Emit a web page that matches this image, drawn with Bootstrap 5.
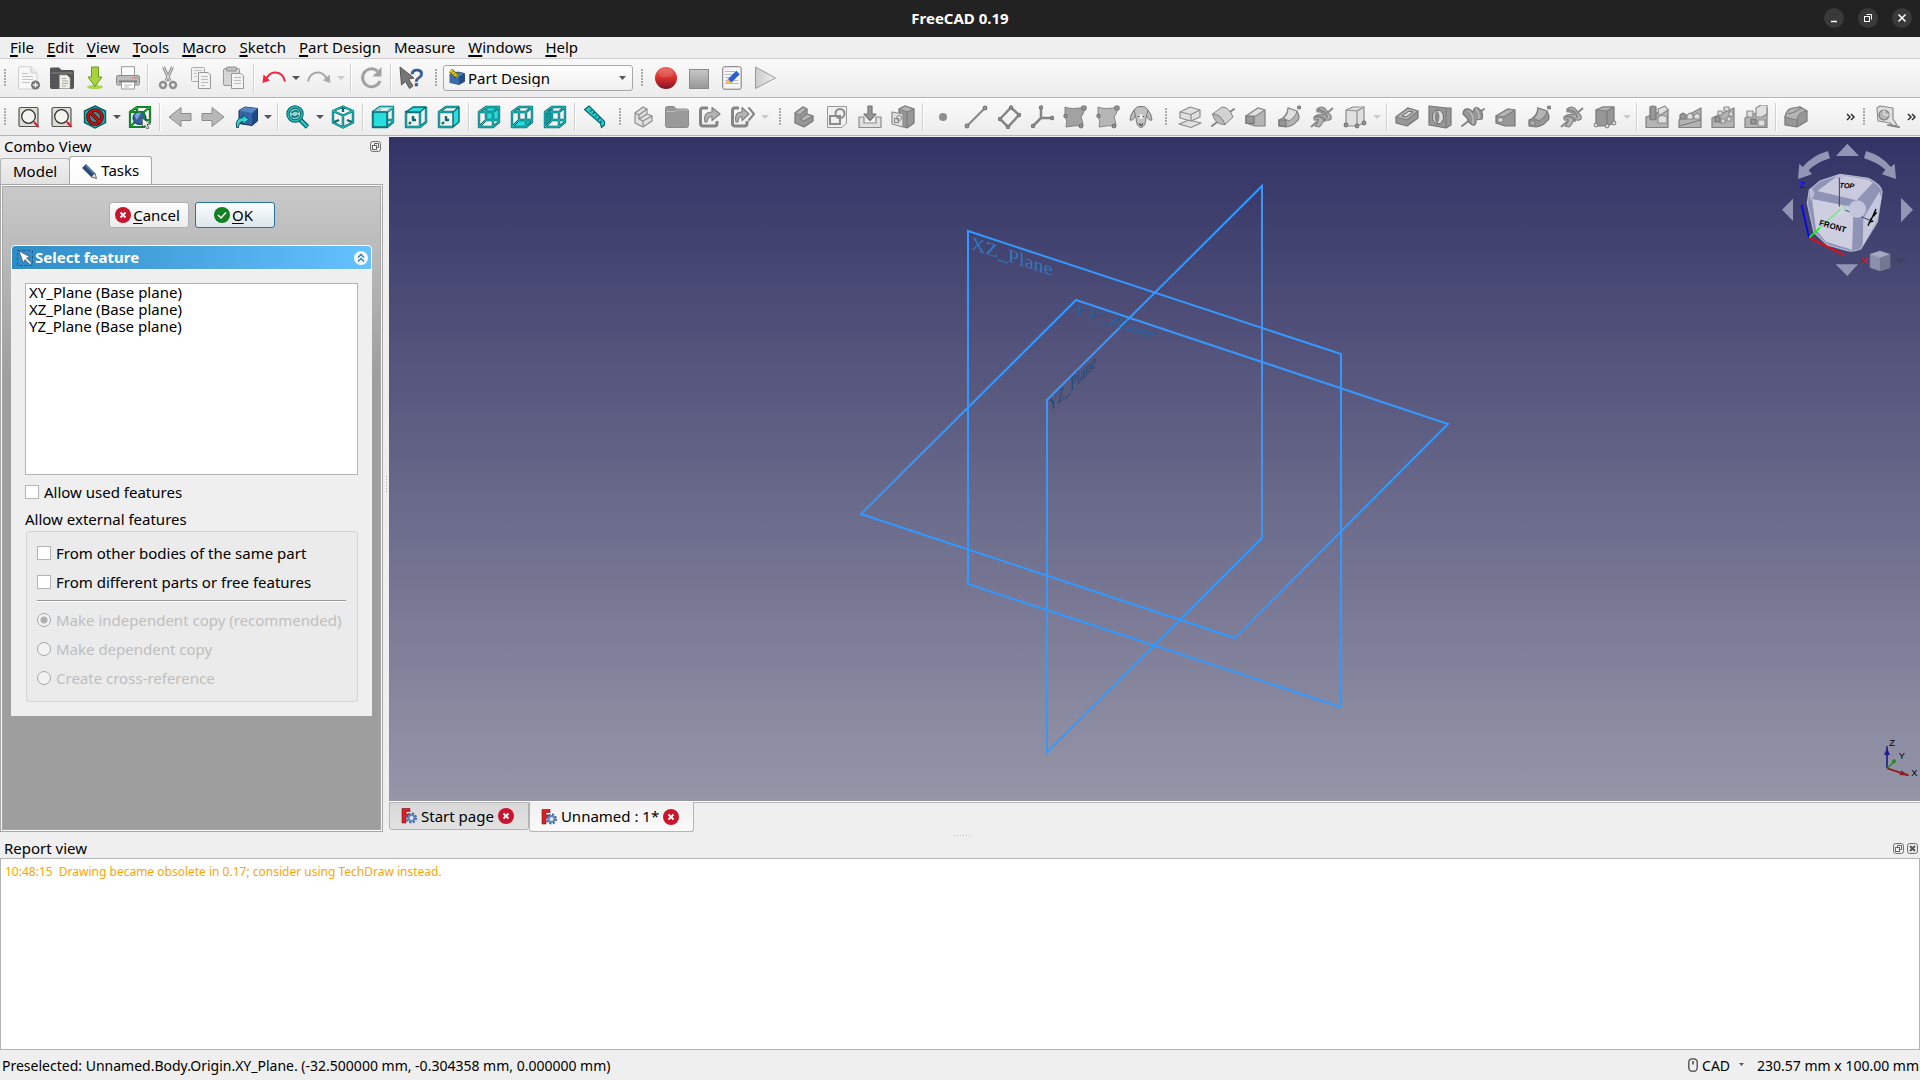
<!DOCTYPE html>
<html lang="en">
<head>
<meta charset="utf-8">
<meta name="viewport" content="width=device-width, initial-scale=1">
<title>FreeCAD 0.19</title>
<link href="https://cdn.jsdelivr.net/npm/bootstrap@5.3.0/dist/css/bootstrap.min.css" rel="stylesheet">
<style>
:root{--line:#b4b4b4;--face:#efefef}
body{font-family:"Noto Sans","Open Sans",sans-serif;font-size:15px;line-height:17px;color:#000;background:var(--face);overflow:hidden}
svg{display:block;flex:none}
.titlebar{background:#222;color:#fff;height:37px}
.winbtns{right:8px;top:8px;gap:14px}
.winbtns button{width:20px;height:20px;border:0;border-radius:50%;background:#393939;padding:0}
.menubar{height:21px;gap:13px;padding-left:10px}
.menubar a{color:#000;text-decoration:none}
.menubar u,.acc{text-decoration:underline;text-underline-offset:2px;text-decoration-thickness:2px}
.acc{text-decoration-thickness:1px}
.tbar{background:linear-gradient(#fafafa,#ececec);border-top:1px solid #d0d0d0;border-bottom:1px solid var(--line)}
.tb-one{height:40px}.tb-two{height:38px;border-top-color:#fff}
.tbtn{width:33px;height:34px;border:0;background:none;padding:0;display:flex;align-items:center;justify-content:center;flex:none}
.tbtn svg{width:24px;height:24px}
.tcar{width:12px;height:34px;border:0;background:none;padding:0;flex:none;display:flex;align-items:center;justify-content:center}
.tcar::after{content:"";border:4px solid transparent;border-top-color:#555;border-bottom:0}
.tcar:disabled::after{border-top-color:#ccc}
.tsep{width:1px;height:28px;background:#d0d0d0;margin:0 3px;flex:none;box-shadow:1px 0 #fff}
.grip{width:4px;height:18px;margin:0 4px 0 8px;flex:none;background-image:radial-gradient(circle at 1px 1px,#aaa 1px,transparent 1px);background-size:4px 3px}
.grip-first{margin:0 4px}
.more{width:16px;border:0;background:none;padding:0;color:#333;flex:none}
.wb{position:relative;width:190px}
.wb svg.ico{position:absolute;left:6px;top:4px}
.wb svg.arr{position:absolute;right:6px;top:10px}
.wb select{height:26px;padding:0 20px 0 24px;font-size:15px;line-height:17px;border:1px solid #a8a8a8;border-radius:3px;background:linear-gradient(#fff,#efefef);color:#000}
.dock{width:384px}
.dock-title{height:20px;padding:1px 3px 0 4px}
.dbtn{width:11px;height:11px;border:0;padding:0;background:none}
.docktabs{height:28px;border:0;padding-left:0;align-items:flex-end;margin-bottom:0}
.docktabs .nav-link{padding:0 12px;border:1px solid var(--line);border-bottom:0;border-radius:3px 3px 0 0;color:#000;height:26px;background:linear-gradient(#f0f0f0,#e2e2e2);font-size:15px;line-height:17px;margin:0}
.docktabs .nav-link.active{height:28px;background:linear-gradient(#fff,#fafafa);color:#000;padding:0 12px 0 11px;margin-left:-1px;border-color:#a8a8a8}
.pane{border:1px solid #a8a8a8;background:#f6f6f6;padding:1px;margin-right:1px}
.paneinner{border:1px solid #a8a8a8;background:linear-gradient(#c9c9c9,#9e9e9e 190px);padding:15px 8px 0}
.qbtns{gap:6px}
.qbtn{height:26px;width:80px;font-size:15px;line-height:17px;padding:0 2px 0 0;border:1px solid #b0b0b0;border-radius:3px;background:linear-gradient(#fdfdfd,#ececec);color:#000;gap:2px}
.qbtn-ok{border-color:#2a72a4;background:linear-gradient(#fbfdfe,#dde6eb)}
.thead{height:25px;border:1px solid #fff;border-radius:4px 4px 0 0;background:linear-gradient(90deg,#308cc6,#66c2ff);color:#fff;font-weight:700;padding:0 3px 0 5px;margin-top:17px;gap:2px}
.tbody{background:var(--face);padding:13px 14px 14px}
.flist{height:192px;background:#fff;border:1px solid var(--line);border-radius:0;padding:0 3px}
.flist li{height:17px}
.tbody .form-check{min-height:0;height:14px;padding:0;margin:0;display:flex;align-items:center}
.tbody .form-check-input{float:none;margin:0 5px 0 0;width:14px;height:14px;border:1px solid #b4b4b4;flex:none;opacity:1}
.tbody .form-check-input[type=checkbox]{border-radius:0}
.tbody .form-check-input[type=radio]{background-color:#f2f2f2;border-color:#a8a8a8}
.tbody .form-check-input[type=radio]:checked{background-image:radial-gradient(circle,#b0b0b0 3px,transparent 4px)}
.tbody .form-check .form-check-label{opacity:1;white-space:nowrap}
.tbody .form-check-input:disabled~.form-check-label{color:#bebebe;opacity:1}
.tbody .used-row{margin-top:10px}
.ext-label{margin-top:12px}
.gbox{border:1px solid #d4d4d4;border-radius:3px;background:#ebebeb;padding:14px 11px 16px 10px;margin:3px 0 0 1px;gap:15px}
.gbox hr{margin:-4px 0 -3px;border-top:1px solid #999;opacity:1;box-shadow:0 1px #fff}
.vsplit{width:5px}
.vsplit::after{content:"";width:1px;height:16px;background:repeating-linear-gradient(#aaa 0 1px,transparent 1px 3px)}
.view3d{background:linear-gradient(#333366,#9696a9);margin-top:1px;min-height:0}
.view3d .scene{width:100%;height:100%}
.navcube{top:0;right:0}
.axes{right:0;bottom:24px}
.doctabs{height:31px;border-top:1px solid #fff;padding:0}
.doctabs .rest{height:1px;background:var(--line)}
.dtab{border:1px solid var(--line);border-radius:0 0 3px 3px;height:28px;background:linear-gradient(#d8d8d8,#e2e2e2);padding:0 14px 0 11px;gap:4px}
.dtab a{color:#000;text-decoration:none}
.dtab.on{height:30px;border-top:0;background:linear-gradient(#f0f0f0,#fafafa)}
.dtab button{border:0;background:none;padding:0}
.reptitle{height:26px;padding:7px 2px 0 4px}
.reptitle::before{content:"";position:absolute;left:50%;top:3px;width:16px;height:1px;margin-left:-6px;background:repeating-linear-gradient(90deg,#bbb 0 1px,transparent 1px 3px)}
.repbtns{gap:3px}
.report{height:192px;border:1px solid var(--line);background:#fff;color:#ffa500;font-size:12px;padding:4px;white-space:pre-wrap}
.status{height:30px;padding:0 1px 0 2px;font-size:14px}
.status button{border:0;background:none;padding:0;color:#000}
.g{fill:#b4b4b4;stroke:#808080;stroke-width:1.2;stroke-linejoin:round}
.gd{fill:#979797;stroke:#767676;stroke-width:1.2;stroke-linejoin:round}
.gl{fill:#e0e0e0;stroke:#8c8c8c;stroke-width:1.2;stroke-linejoin:round}
.gn{fill:none;stroke:#868686;stroke-width:2;stroke-linejoin:round;stroke-linecap:round}
.wd{fill:none;stroke:#0b6a6e;stroke-width:2.4;stroke-linejoin:round}
.wl{fill:none;stroke:#22d3d3;stroke-width:.9}
.wf{fill:#27dddf;stroke:#0b6a6e;stroke-width:1.4;stroke-linejoin:round}
.pl{fill:none;stroke:#3399ff;stroke-width:2}
.plabel{font-family:"Liberation Serif",serif;font-size:19px}
</style>
<script src="https://cdn.jsdelivr.net/npm/bootstrap@5.3.0/dist/js/bootstrap.bundle.min.js"></script>
</head>
<body class="d-flex flex-column vh-100">
<svg width="0" height="0" class="position-absolute" aria-hidden="true">
<defs>
<linearGradient id="lgRed" x1="0" y1="0" x2="0" y2="1"><stop offset="0" stop-color="#ee6258"/><stop offset=".55" stop-color="#d42a2c"/><stop offset="1" stop-color="#7d1426"/></linearGradient>
<linearGradient id="lgGray" x1="0" y1="0" x2="0" y2="1"><stop offset="0" stop-color="#c8c8c8"/><stop offset="1" stop-color="#969696"/></linearGradient>
<linearGradient id="lgPlay" x1="0" y1="0" x2="1" y2="0"><stop offset="0" stop-color="#ccc"/><stop offset="1" stop-color="#eee"/></linearGradient>
<path id="wire" d="M2 7L9 2H22V17L16 22H2Z M2 7H16V22 M16 7L22 2 M9 2V15H22 M9 15L2 22"/>
<symbol id="i-new" viewBox="0 0 24 24"><path d="M3 .7H14L20 7V21.500A1.500 1.500 0 0 1 18.500 23H3A1.500 1.500 0 0 1 1.500 21.500V2A1.500 1.500 0 0 1 3 .7Z" fill="#f8f8f8" stroke="#cfcfcf"/><path d="M14 .7V7H20" fill="#e8e8e8" stroke="#cfcfcf"/><path d="M5 10.500H16M5 13.500H16M5 16.500H13M5 7.500H11" stroke="#c4c4c4"/><circle cx="18.500" cy="19" r="4.500" fill="#777"/><path d="M18.500 16.500V21.500M16 19H21" stroke="#fff" stroke-width="1.300"/></symbol>
<symbol id="i-open" viewBox="0 0 24 24"><path d="M0 3Q0 1.500 1.500 1.500H9L11.500 4H22.500Q24 4 24 5.500V21Q24 23 22 23H2Q0 23 0 21Z" fill="#555"/><path d="M1 7H23" stroke="#888"/><path d="M9.500 9H17L20 12V22.500H9.500Z" fill="#eeeee4" stroke="#aaa" stroke-width=".6"/><path d="M12 12.500H16M12 15H18M12 17.500H18M12 20H16" stroke="#a8a8a0"/></symbol>
<symbol id="i-save" viewBox="0 0 24 24"><ellipse cx="12" cy="21" rx="8" ry="2" fill="#a9d650"/><path d="M8.500 1H15.500V11H19L12 20.500L5 11H8.500Z" fill="#a5d43c" stroke="#6f9a1d" stroke-linejoin="round"/></symbol>
<symbol id="i-print" viewBox="0 0 24 24"><path d="M5.500 .7H18.500V10H5.500Z" fill="#fafafa" stroke="#999"/><rect x=".5" y="9.500" width="23" height="9.500" rx="1.500" fill="#bdbdbd" stroke="#8a8a8a"/><path d="M3 15.500H21" stroke="#777" stroke-width="2"/><path d="M5.500 16H18.500V23H5.500Z" fill="#fff" stroke="#999"/><path d="M8 19H16M8 21H13" stroke="#bbb"/><path d="M16 12H22" stroke="#e55" stroke-dasharray="1.500 .8"/></symbol>
<symbol id="i-cut" viewBox="0 0 24 24"><path d="M7.500 1L14 15M16.500 1L10 15" stroke="#909090" stroke-width="3"/><path d="M7.500 1L14 15M16.500 1L10 15" stroke="#dedede" stroke-width="1"/><circle cx="7" cy="19" r="3" fill="none" stroke="#8e8e8e" stroke-width="2.400"/><circle cx="17" cy="19" r="3" fill="none" stroke="#8e8e8e" stroke-width="2.400"/></symbol>
<symbol id="i-copy" viewBox="0 0 24 24"><rect x="2.500" y="1.500" width="13" height="14" rx="1" fill="#f1f1f1" stroke="#aaa"/><path d="M5 4.500H13M5 7.500H8M5 10.500H8" stroke="#c4c4c4"/><path d="M9.500 6.500H19L21.500 9V22.500H9.500Z" fill="#f3f3f3" stroke="#999"/><path d="M12 10.500H19M12 13.500H19M12 16.500H19M12 19.500H16" stroke="#bcbcbc"/></symbol>
<symbol id="i-paste" viewBox="0 0 24 24"><rect x="1.500" y="2.500" width="16" height="17" rx="1.500" fill="#d6d6d6" stroke="#999"/><rect x="4.500" y="1" width="10" height="4" rx="1" fill="#c0c0c0" stroke="#8e8e8e"/><path d="M9.500 7.500H19L21.500 10V22.500H9.500Z" fill="#f3f3f3" stroke="#999"/><path d="M12 11.500H19M12 14.500H19M12 17.500H19" stroke="#bcbcbc"/></symbol>
<symbol id="i-undo" viewBox="0 0 24 24"><path d="M23 15.500Q21 6 12 6.500Q7.500 7 4 13" fill="none" stroke="#ef2942" stroke-width="2"/><path d="M.5 17L1.500 8.500L8 14.500Z" fill="#ef2942"/></symbol>
<symbol id="i-redo" viewBox="0 0 24 24"><path d="M1 15.500Q3 6 12 6.500Q16.500 7 20 13" fill="none" stroke="#a9a9a9" stroke-width="2"/><path d="M23.500 17L22.500 8.500L16 14.500Z" fill="#a9a9a9"/></symbol>
<symbol id="i-refresh" viewBox="0 0 24 24"><path d="M18.500 5A9 9 0 1 0 21 15" fill="none" stroke="#a2a2a2" stroke-width="3"/><path d="M22.500 1V10.500H13.500Z" fill="#a2a2a2"/></symbol>
<symbol id="i-what" viewBox="0 0 24 24"><text x="11" y="20" font-family="Liberation Sans,sans-serif" font-size="24" fill="#3b669f" stroke="#284a7d" stroke-width=".6">?</text><path d="M1 1L15 12L9.500 13L14 20L10.500 22.500L6.500 15.500L2.500 19Z" fill="#777" stroke="#555"/></symbol>
<symbol id="i-rec" viewBox="0 0 24 24"><circle cx="12" cy="12" r="11" fill="url(#lgRed)"/><ellipse cx="12" cy="7" rx="7.500" ry="4.500" fill="#fff" opacity=".12"/></symbol>
<symbol id="i-stop" viewBox="0 0 24 24"><rect x="2.500" y="3.500" width="19" height="19" fill="url(#lgGray)" stroke="#8a8a8a"/></symbol>
<symbol id="i-macro" viewBox="0 0 24 24"><rect x="2.700" y=".7" width="18.500" height="22.500" rx="2" fill="#f5f5f5" stroke="#777"/><path d="M5 5.500H15M5 8.500H13M5 11.500H11M5 14.500H18M5 17.500H19" stroke="#bbb"/><path d="M18 6.500L9.500 15" stroke="#2a5ed6" stroke-width="5"/><path d="M7.500 12.500L11.500 16.500L5.500 18Z" fill="#f7b56b"/></symbol>
<symbol id="i-play" viewBox="0 0 24 24"><path d="M2.500 1L22.500 12L2.500 22.500Z" fill="url(#lgPlay)" stroke="#9a9a9a"/></symbol>
<symbol id="i-pd" viewBox="0 0 16 16"><path d="M1 5L9 3L15.500 4.500V12.500L10 15.500L1 13.500Z" fill="#4a7fc0" stroke="#173b66" stroke-width=".8"/><path d="M1 6.500L10 8V15.500L1 13.500Z" fill="#3a6cab"/><path d="M10 7.500L15.500 4.500V12.500L10 15.500Z" fill="#234d85"/><path d="M1.500 1.500L8.500 7.500" stroke="#5d5300" stroke-width="4.600"/><path d="M1.500 1.500L8.500 7.500" stroke="#e5cf25" stroke-width="3.200" stroke-dasharray="2.200 .6"/></symbol>
<symbol id="i-fit" viewBox="0 0 24 24"><rect x="2" y="2.500" width="19" height="19" rx="1.500" fill="#deddd6" stroke="#55554f" stroke-width="1.200"/><circle cx="11.500" cy="11.500" r="6.800" fill="#f4f4f0" stroke="#333" stroke-width="1.300"/><path d="M17 17L21.500 22" stroke="#d4213c" stroke-width="2.200"/></symbol>
<symbol id="i-draw" viewBox="0 0 24 24"><path d="M12 1L22.500 6V17.500L12 23L1.500 17.500V6Z" fill="#1ab8bb" stroke="#075e62" stroke-width="1.400"/><circle cx="12" cy="12" r="7" fill="#4f8285" stroke="#200a0a" stroke-width="3.600"/><path d="M7 7L17 17" stroke="#200a0a" stroke-width="3.600"/><circle cx="12" cy="12" r="7" fill="none" stroke="#d60d12" stroke-width="2.200"/><path d="M7 7L17 17" stroke="#d60d12" stroke-width="2.200"/></symbol>
<symbol id="i-bbox" viewBox="0 0 24 24"><use href="#wire" fill="none" stroke="#064d13" stroke-width="2.200"/><use href="#wire" fill="none" stroke="#20b53a" stroke-width="1.100"/><circle cx="11.500" cy="13" r="6.500" fill="#365fa3" stroke="#0c2d5c"/><path d="M6.500 10.500A5.500 5.500 0 0 1 13 7.800L9 15Z" fill="#7ea3d6"/><path d="M2 7H16V22H2Z" fill="none" stroke="#12882a" stroke-width="1.500"/><path d="M14 13L22.500 19L19 19.500L21 23L19 24L17 20.500L14.500 22Z" fill="#eee" stroke="#444" stroke-width=".8"/></symbol>
<symbol id="i-back" viewBox="0 0 24 24"><path d="M1 12L13 2.500V8.500H23V15.500H13V21.500Z" fill="#b8b8b8" stroke="#8b8b8b"/></symbol>
<symbol id="i-fwd" viewBox="0 0 24 24"><path d="M23 12L11 2.500V8.500H1V15.500H11V21.500Z" fill="#b8b8b8" stroke="#8b8b8b"/></symbol>
<symbol id="i-link" viewBox="0 0 24 24"><path d="M5 5.500L11 2L23.500 3.500V16L18 20.500L5 18.500Z" fill="#3465a4" stroke="#142c50"/><path d="M18 8L23.500 3.500V16L18 20.500Z" fill="#204a87"/><path d="M5 5.500L11 2L23.500 3.500L18 8Z" fill="#5585c2"/><path d="M2.500 22.500Q1 13 9 12.500V9.500L14.500 14.500L9 19.500V16.500Q4.500 17 4.500 22.500Z" fill="#32d4d8" stroke="#065056"/></symbol>
<symbol id="i-zoom" viewBox="0 0 24 24"><path d="M13 13.500L21.500 22" stroke="#075e62" stroke-width="4.800"/><path d="M14 14.500L21 21.500" stroke="#27d0d2" stroke-width="2.300"/><circle cx="9" cy="9" r="7" fill="#9fd5d4" stroke="#075e62" stroke-width="3.400"/><circle cx="9" cy="9" r="7" fill="none" stroke="#27bfc2" stroke-width="1.500"/><path d="M5.500 8Q9 4 12.500 7.500M12.500 10Q9 14 5.500 10.500" fill="none" stroke="#0c8085" stroke-width="2"/></symbol>
<symbol id="i-iso" viewBox="0 0 24 24"><path class="wd" d="M12 1.500L22 6V17.500L12 22.500L2 17.500V6ZM2 6L12 10.500L22 6M12 10.500V22.500M12 1.500V7M2 17.500L8 15M22 17.500L16 15"/><path class="wl" d="M12 1.500L22 6V17.500L12 22.500L2 17.500V6ZM2 6L12 10.500L22 6M12 10.500V22.500"/></symbol>
<symbol id="i-front" viewBox="0 0 24 24"><use href="#wire" class="wd"/><use href="#wire" class="wl"/><path d="M9 2H22L16 7H2Z" fill="#f2f2f2" opacity=".6"/><path class="wf" d="M2 7H16V22H2Z"/></symbol>
<symbol id="i-top" viewBox="0 0 24 24"><path class="wd" d="M2 7H16V22H2ZM16 22L22 17V2M9 11V15H12M5 19L7 17"/><path class="wl" d="M2 7H16V22H2ZM16 22L22 17V2"/><path class="wf" d="M2 7L9 2H22L16 7Z"/></symbol>
<symbol id="i-right" viewBox="0 0 24 24"><path class="wd" d="M16 7H2V22H16M2 7L9 2H22M9 11V15H12M5 19L7 17"/><path class="wl" d="M16 7H2V22H16M2 7L9 2H22"/><path class="wf" d="M16 7L22 2V17L16 22Z"/></symbol>
<symbol id="i-rear" viewBox="0 0 24 24"><path class="wf" d="M9 2H22V15H9Z"/><use href="#wire" class="wd"/><use href="#wire" class="wl"/></symbol>
<symbol id="i-bottom" viewBox="0 0 24 24"><path class="wf" d="M2 22L9 15H22L16 22Z"/><use href="#wire" class="wd"/><use href="#wire" class="wl"/></symbol>
<symbol id="i-left" viewBox="0 0 24 24"><path d="M2 7L9 2V15L2 22Z" fill="#12989c"/><use href="#wire" class="wd"/><use href="#wire" class="wl"/></symbol>
<symbol id="i-ruler" viewBox="0 0 24 24"><path d="M1.500 4.500L6 1L21.500 16.500V20L18.500 22.500L17.500 18.500Z" fill="#27cdd0" stroke="#0b6a6e" stroke-width="1.200" stroke-linejoin="round"/><path d="M7 6.500L8.500 5M9.500 9L12 7M12 12L13.500 10.500M14.500 14.500L17 12.500M17 17.500L18.500 16" stroke="#075e62" stroke-width="1.300"/></symbol>
<symbol id="i-part" viewBox="0 0 24 24"><path class="gl" d="M3 8L11 2L15 4V9L20 11V16L11 22L3 18Z"/><path class="gl" d="M3 8L7 10V14L11 16V22M7 10L15 4M11 16L20 11M7 14L15 9"/></symbol>
<symbol id="i-folder" viewBox="0 0 24 24"><path d="M.5 3.500Q.5 1.500 2.500 1.500H9L11 4H21.500Q23.500 4 23.500 6V20.500Q23.500 22.500 21.500 22.500H2.500Q.5 22.500 .5 20.500Z" fill="#999" stroke="#8a8a8a"/><path d="M1 6.500H10L12 5H23" fill="none" stroke="#bbb"/></symbol>
<symbol id="i-share" viewBox="0 0 24 24"><path d="M10 3H5Q2.500 3 2.500 5.500V18.500Q2.500 21 5 21H16.500Q19 21 19 18.500V16" fill="none" stroke="#858585" stroke-width="3"/><path class="g" d="M7 17Q5 7 14 7V2.500L22 9L14 15.500V11.500Q9.500 11.500 9 17Z"/></symbol>
<symbol id="i-share2" viewBox="0 0 24 24"><path d="M8 3H4Q1.500 3 1.500 5.500V18.500Q1.500 21 4 21H13.500Q16 21 16 18.500V16" fill="none" stroke="#858585" stroke-width="3"/><path class="g" d="M5 17Q3 7 11 7V2.500L18 9L11 15.500V11.500Q7 11.500 7 17Z"/><path class="gn" d="M18 3L23 9L18 15"/></symbol>
<symbol id="i-body" viewBox="0 0 24 24"><path class="gd" d="M3 8L11 2L15 4V9L21 11V16L12 22L3 18Z"/><path class="g" d="M3 8L11 2L15 4L8 10ZM8 14L15 9L21 11L12 16Z"/></symbol>
<symbol id="i-sketch" viewBox="0 0 24 24"><path d="M2.500 1.500H21.500V18L17 22.500H2.500Z" fill="#f0f0f0" stroke="#999"/><rect x="5" y="11" width="10" height="8" fill="none" stroke="#8b8b8b" stroke-width="2"/><circle cx="15" cy="8.500" r="4.500" fill="none" stroke="#8b8b8b" stroke-width="2"/></symbol>
<symbol id="i-import" viewBox="0 0 24 24"><path class="gl" d="M1 12H6V18H18V12H23V22.500H1Z"/><path class="gd" d="M10 1H14V9H18L12 15.500L6 9H10Z"/></symbol>
<symbol id="i-binder" viewBox="0 0 24 24"><path class="gd" d="M8 4L14 1L23 4V18L16 23L8 20Z"/><path class="g" d="M8 4L14 1L23 4L16 7Z"/><path d="M16 7V23" stroke="#777"/><path class="gl" d="M1 7L12 9V22L1 19Z"/><circle cx="8" cy="13" r="2.500" fill="none" stroke="#888"/><rect x="3.500" y="13.500" width="4" height="4" fill="none" stroke="#888"/></symbol>
<symbol id="i-point" viewBox="0 0 24 24"><circle cx="12" cy="12" r="4" fill="#8e8e8e"/></symbol>
<symbol id="i-line" viewBox="0 0 24 24"><path class="gn" d="M3 21L21 3"/><g class="gd"><circle cx="3" cy="21" r="1.800"/><circle cx="21" cy="3" r="1.800"/></g></symbol>
<symbol id="i-plane" viewBox="0 0 24 24"><path d="M3 14L14 2.500L22 10L11 22Z" fill="none" stroke="#858585" stroke-width="2.500"/><g class="gd"><circle cx="3" cy="14" r="1.600"/><circle cx="14" cy="2.500" r="1.600"/><circle cx="22" cy="10" r="1.600"/><circle cx="11" cy="22" r="1.600"/></g></symbol>
<symbol id="i-axis" viewBox="0 0 24 24"><path d="M11 2V13H22M11 13L3 21" fill="none" stroke="#858585" stroke-width="2.500"/><g class="gd"><circle cx="11" cy="2.500" r="1.600"/><circle cx="22" cy="13" r="1.600"/><circle cx="3" cy="21" r="1.600"/></g></symbol>
<symbol id="i-surf" viewBox="0 0 24 24"><path fill="#a2a2a2" stroke="#808080" d="M2 2Q9 5 22 2Q21 9 18 12Q20 17 20 21Q13 20 3 22Q5 16 2 11Z"/><g class="gd"><rect x="19" y="1" width="4" height="4" rx="1"/><circle cx="2.500" cy="11" r="1.600"/><circle cx="18" cy="21" r="1.800"/></g></symbol>
<symbol id="i-surf2" viewBox="0 0 24 24"><path fill="#b6b6b6" stroke="#888" d="M2 2Q9 5 22 2Q21 9 18 12Q20 17 20 21Q13 20 3 22Q5 16 2 11Z"/><g class="gd"><rect x="19" y="1" width="4" height="4" rx="1"/><circle cx="2.500" cy="11" r="1.600"/><circle cx="18" cy="21" r="1.800"/></g></symbol>
<symbol id="i-sheep" viewBox="0 0 24 24"><path fill="#bdbdbd" stroke="#777" d="M6 4Q1.500 8 1 15Q4 16.500 7 10ZM18 4Q22.500 8 23 15Q20 16.500 17 10Z"/><path fill="#c2c2c2" stroke="#777" d="M5 5Q8 .5 12 1.500Q16 .5 19 5L17 13Q16.500 22 12 22.500Q7.500 22 7 13Z"/><ellipse cx="12" cy="11.500" rx="4" ry="2" fill="#f4f4f4"/><path d="M8.500 11.500H10.500M13.500 11.500H15.500M10 18.500L12 20.500L14 18.500" stroke="#555" stroke-width="1.300" fill="none"/></symbol>
<symbol id="i-pad" viewBox="0 0 24 24"><path class="gl" d="M1 19L11 15L23 18L13 22.500Z"/><path class="gl" d="M2 7L12 2L22 5V12L13 16L2 13Z"/><path class="gl" d="M2 7L13 9.500L22 5M13 9.500V16"/></symbol>
<symbol id="i-rev" viewBox="0 0 24 24"><path class="gn" d="M1 21L23 4"/><path fill="#d2d2d2" stroke="#858585" stroke-linejoin="round" d="M1.500 9L11 2Q18 2 22 12L14 19.500Q10 9 1.500 9Z"/><path fill="#b8b8b8" stroke="#858585" d="M1.500 9Q10 9 14 19.500Q4 20 1.500 9Z"/></symbol>
<symbol id="i-loft" viewBox="0 0 24 24"><path class="g" d="M2 11L14 3L21 5V21H11L2 18Z"/><path class="gl" d="M2 11L14 3L21 5L10 12Z"/><rect x="2" y="11" width="8" height="7.500" class="gd"/></symbol>
<symbol id="i-pipe" viewBox="0 0 24 24"><path class="g" d="M2 15Q10 12 11 3L20 6Q24 14 20 16Q16 21 9 22L2 21Z"/><path class="gl" d="M6 13Q11 10 11 3L20 6Q19 12 12 16Z"/><rect x="2" y="15" width="7" height="6" class="gd"/><circle cx="22" cy="2.500" r="1.500" class="gd"/></symbol>
<symbol id="i-subpipe" viewBox="0 0 24 24"><path class="gd" d="M2 15Q10 12 11 3L20 6Q24 14 20 16Q16 21 9 22L2 21Z"/><path class="g" d="M6 13Q11 10 11 3L20 6Q19 12 12 16Z"/><rect x="3" y="16" width="5" height="4" class="g"/><circle cx="22" cy="2.500" r="1.500" class="gd"/></symbol>
<symbol id="i-helix" viewBox="0 0 24 24"><path d="M1 22L23 3" stroke="#888" stroke-width="2"/><path class="g" d="M7 4Q14 -1 18 8Q22 10 21 14Q17 17 14 13Q13 19 9 22L5 21Q9 17 8 14Q3 17 4 12Q8 8 14 10Q12 6 7 7Z"/><path class="gn" d="M5 12Q12 10 15 16M8 5Q16 5 17 12"/></symbol>
<symbol id="i-box" viewBox="0 0 24 24"><path class="gl" d="M3 5L10 2H21V18L14 21H3Z"/><path class="gl" d="M3 5L14 6L21 2M14 6V21"/><g class="gd"><circle cx="3" cy="20" r="1.800"/><circle cx="14" cy="21" r="1.800"/><circle cx="21" cy="18" r="1.800"/></g></symbol>
<symbol id="i-pocket" viewBox="0 0 24 24"><path class="gd" d="M1 12L13 3L23 6V13L12 21L1 18Z"/><path class="g" d="M1 12L13 3L23 6L12 15Z"/><path d="M7 11L14 6L18 7L11 12Z" fill="#ddd" stroke="#666"/></symbol>
<symbol id="i-hole" viewBox="0 0 24 24"><path class="gd" d="M1 1L19 3H23V20L18 23L1 20Z"/><path d="M18 3V23" stroke="#777"/><ellipse cx="10" cy="12" rx="5.500" ry="7" fill="#ddd" stroke="#666"/><path d="M9 5Q14 12 9 19Q4 12 9 5Z" fill="#888"/></symbol>
<symbol id="i-groove" viewBox="0 0 24 24"><path class="gn" d="M1 21L23 4"/><path class="gd" d="M2 9Q2 3 8 4L12 7Q13 1 17 3Q23 7 21 14L15 15Q15 21 12 20Q8 19 6 13Z"/><path d="M7 5Q13 9 12 19M15 3Q19 8 18 14" fill="none" stroke="#ccc"/></symbol>
<symbol id="i-subloft" viewBox="0 0 24 24"><path class="gd" d="M2 11L14 4L21 5V21H11L2 18Z"/><path class="g" d="M2 11L14 4L21 5L10 12Z"/><rect x="4" y="13" width="5" height="4" class="gl"/></symbol>
<symbol id="i-subbox" viewBox="0 0 24 24"><path class="gd" d="M3 5L10 2H21V18L14 21H3Z"/><path class="g" d="M3 5L10 2H21L14 6Z"/><path d="M14 6V21" stroke="#767676"/><g class="gl"><circle cx="3" cy="20" r="1.800"/><circle cx="14" cy="21" r="1.800"/><circle cx="21" cy="18" r="1.800"/></g></symbol>
<symbol id="i-mirror" viewBox="0 0 24 24"><path class="g" d="M1 12L12 8L23 4V22.500H1Z"/><path class="gd" d="M5 2Q8 0 11 2V14Q8 16 5 14Z"/><path class="gl" d="M13 4L20 1L23 5L14 11ZM13 12Q17 9 22 12V18H13Z"/></symbol>
<symbol id="i-linpat" viewBox="0 0 24 24"><path class="g" d="M1 15L23 3V22.500H1Z"/><path class="gd" d="M2 10L5 8L8 10V14H2Z"/><path class="gl" d="M9 10L12 8L15 10V14H9ZM16 10L19 8L22 10V14H16Z"/><path d="M1 21L23 15" stroke="#777"/></symbol>
<symbol id="i-polpat" viewBox="0 0 24 24"><path class="g" d="M1 13L23 3V22.500H1Z"/><path class="gd" d="M4 12H9V17H4Z"/><path class="gl" d="M7 6H11V10H7ZM13 2H18V6H13ZM18 7H22V11H18ZM16 12H20V16H16ZM10 14H14V18H10Z"/></symbol>
<symbol id="i-multi" viewBox="0 0 24 24"><path class="g" d="M1 13L23 3V22.500H1Z"/><path class="gl" d="M3 6H9V12H3ZM12 3L17 0H23V9L18 12H12ZM14 15H21V21H14Z"/><path class="gd" d="M7 14H12V19H7Z"/></symbol>
<symbol id="i-fillet" viewBox="0 0 24 24"><path class="gd" d="M1 20V12Q3 3 10 3L16 2L23 6V16L13 22Z"/><path class="g" d="M1 12Q3 3 10 3L16 2L23 6Q14 7 13 15Z"/><path d="M13 15V22M4 9Q11 8 17 3" stroke="#777" fill="none"/></symbol>
<symbol id="i-tape" viewBox="0 0 24 24"><path class="gl" d="M1 3L4 1L17 3V14L21 20L17 21L14 18L2 16Z"/><circle cx="8" cy="10" r="5" class="g"/><path d="M8 5V10H13" stroke="#eee" fill="none"/><path class="gn" d="M12 20L23 22"/></symbol>
<symbol id="i-float" viewBox="0 0 11 11"><rect x=".6" y=".6" width="9.800" height="9.800" rx="2" fill="#f4f4f4" stroke="#666"/><rect x="2.500" y="4.500" width="4" height="4" fill="none" stroke="#666"/><path d="M4.500 4.500V2.500H8.500V6.500H6.500" fill="none" stroke="#666"/></symbol>
<symbol id="i-close" viewBox="0 0 11 11"><rect x=".6" y=".6" width="9.800" height="9.800" rx="2" fill="#f4f4f4" stroke="#666"/><path d="M3 3L8 8M8 3L3 8" stroke="#555" stroke-width="2"/></symbol>
<symbol id="i-redx" viewBox="0 0 16 16"><circle cx="8" cy="8" r="8" fill="#c9162e"/><path d="M5.500 5.500L10.500 10.500M10.500 5.500L5.500 10.500" stroke="#fff" stroke-width="1.800"/></symbol>
<symbol id="i-fc" viewBox="0 0 16 16"><path d="M1 .5H9V3.500H5V6H8V9H5V15H1Z" fill="#dd1f26" stroke="#731016" stroke-width=".6"/><circle cx="10.500" cy="10" r="4.500" fill="none" stroke="#3d6299" stroke-width="2" stroke-dasharray="2 1.530"/><circle cx="10.500" cy="10" r="3" fill="#dfe8f4" stroke="#5d87bf" stroke-width="2"/></symbol>
</defs>
</svg>

<header class="titlebar position-relative d-flex align-items-center justify-content-center fw-bold">
  FreeCAD 0.19
  <div class="winbtns position-absolute d-flex">
    <button aria-label="Minimize"><svg width="20" height="20"><path d="M7 13.500H13" stroke="#fff" stroke-width="1.500"/></svg></button>
    <button aria-label="Restore"><svg width="20" height="20" fill="none" stroke="#fff"><rect x="6.500" y="8.500" width="5" height="5"/><path d="M8.500 6.500H13.500V11.500"/></svg></button>
    <button aria-label="Close"><svg width="20" height="20"><path d="M6.500 6.500L13.500 13.500M13.500 6.500L6.500 13.500" stroke="#fff" stroke-width="1.500"/></svg></button>
  </div>
</header>

<nav class="menubar d-flex align-items-center" aria-label="Menu">
  <a href="#"><u>F</u>ile</a><a href="#"><u>E</u>dit</a><a href="#"><u>V</u>iew</a><a href="#"><u>T</u>ools</a><a href="#"><u>M</u>acro</a><a href="#"><u>S</u>ketch</a><a href="#"><u>P</u>art Design</a><a href="#">Measure</a><a href="#"><u>W</u>indows</a><a href="#"><u>H</u>elp</a>
</nav>

<div class="tbar tb-one d-flex align-items-center" role="toolbar" aria-label="File">
  <span class="grip grip-first"></span>
  <button class="tbtn" aria-label="New"><svg><use href="#i-new"/></svg></button>
  <button class="tbtn" aria-label="Open"><svg><use href="#i-open"/></svg></button>
  <button class="tbtn" aria-label="Save"><svg><use href="#i-save"/></svg></button>
  <button class="tbtn" aria-label="Print"><svg><use href="#i-print"/></svg></button>
  <span class="tsep"></span>
  <button class="tbtn" disabled aria-label="Cut"><svg><use href="#i-cut"/></svg></button>
  <button class="tbtn" disabled aria-label="Copy"><svg><use href="#i-copy"/></svg></button>
  <button class="tbtn" disabled aria-label="Paste"><svg><use href="#i-paste"/></svg></button>
  <span class="tsep"></span>
  <button class="tbtn" aria-label="Undo"><svg><use href="#i-undo"/></svg></button><button class="tcar" aria-label="Undo list"></button>
  <button class="tbtn" disabled aria-label="Redo"><svg><use href="#i-redo"/></svg></button><button class="tcar" disabled aria-label="Redo list"></button>
  <span class="tsep"></span>
  <button class="tbtn" disabled aria-label="Refresh"><svg><use href="#i-refresh"/></svg></button>
  <span class="tsep"></span>
  <button class="tbtn" aria-label="What's this"><svg><use href="#i-what"/></svg></button>
  <span class="grip"></span>
  <div class="wb">
    <select class="form-select" aria-label="Workbench"><option>Part Design</option></select>
    <svg class="ico" width="16" height="16"><use href="#i-pd"/></svg>
    <svg class="arr" width="9" height="6"><path d="M1 1H8L4.500 5Z" fill="#555"/></svg>
  </div>
  <span class="grip"></span>
  <button class="tbtn" aria-label="Record macro"><svg><use href="#i-rec"/></svg></button>
  <button class="tbtn" disabled aria-label="Stop macro"><svg><use href="#i-stop"/></svg></button>
  <button class="tbtn" aria-label="Macros"><svg><use href="#i-macro"/></svg></button>
  <button class="tbtn" disabled aria-label="Execute macro"><svg><use href="#i-play"/></svg></button>
</div>

<div class="tbar tb-two d-flex align-items-center" role="toolbar" aria-label="View and Part Design">
  <span class="grip grip-first"></span>
  <button class="tbtn" aria-label="Fit all"><svg><use href="#i-fit"/></svg></button>
  <button class="tbtn" aria-label="Fit selection"><svg><use href="#i-fit"/></svg></button>
  <button class="tbtn" aria-label="Draw style"><svg><use href="#i-draw"/></svg></button><button class="tcar" aria-label="Draw styles"></button>
  <button class="tbtn" aria-label="Bounding box"><svg><use href="#i-bbox"/></svg></button>
  <span class="tsep"></span>
  <button class="tbtn" disabled aria-label="Back"><svg><use href="#i-back"/></svg></button>
  <button class="tbtn" disabled aria-label="Forward"><svg><use href="#i-fwd"/></svg></button>
  <button class="tbtn" aria-label="Go to linked object"><svg><use href="#i-link"/></svg></button><button class="tcar" aria-label="Link actions"></button>
  <span class="tsep"></span>
  <button class="tbtn" aria-label="Sync view"><svg><use href="#i-zoom"/></svg></button><button class="tcar" aria-label="Sync options"></button>
  <button class="tbtn" aria-label="Isometric"><svg><use href="#i-iso"/></svg></button>
  <span class="tsep"></span>
  <button class="tbtn" aria-label="Front"><svg><use href="#i-front"/></svg></button>
  <button class="tbtn" aria-label="Top"><svg><use href="#i-top"/></svg></button>
  <button class="tbtn" aria-label="Right"><svg><use href="#i-right"/></svg></button>
  <span class="tsep"></span>
  <button class="tbtn" aria-label="Rear"><svg><use href="#i-rear"/></svg></button>
  <button class="tbtn" aria-label="Bottom"><svg><use href="#i-bottom"/></svg></button>
  <button class="tbtn" aria-label="Left"><svg><use href="#i-left"/></svg></button>
  <span class="tsep"></span>
  <button class="tbtn" aria-label="Measure distance"><svg><use href="#i-ruler"/></svg></button>
  <span class="grip"></span>
  <button class="tbtn" disabled aria-label="Create part"><svg><use href="#i-part"/></svg></button>
  <button class="tbtn" disabled aria-label="Create group"><svg><use href="#i-folder"/></svg></button>
  <button class="tbtn" disabled aria-label="Make link"><svg><use href="#i-share"/></svg></button>
  <button class="tbtn" disabled aria-label="Make sub-link"><svg><use href="#i-share2"/></svg></button><button class="tcar" disabled aria-label="Link options"></button>
  <span class="grip"></span>
  <button class="tbtn" disabled aria-label="Create body"><svg><use href="#i-body"/></svg></button>
  <button class="tbtn" disabled aria-label="Create sketch"><svg><use href="#i-sketch"/></svg></button>
  <button class="tbtn" disabled aria-label="Map sketch"><svg><use href="#i-import"/></svg></button>
  <button class="tbtn" disabled aria-label="Validate sketch"><svg><use href="#i-binder"/></svg></button>
  <span class="tsep"></span>
  <button class="tbtn" disabled aria-label="Datum point"><svg><use href="#i-point"/></svg></button>
  <button class="tbtn" disabled aria-label="Datum line"><svg><use href="#i-line"/></svg></button>
  <button class="tbtn" disabled aria-label="Datum plane"><svg><use href="#i-plane"/></svg></button>
  <button class="tbtn" disabled aria-label="Coordinate system"><svg><use href="#i-axis"/></svg></button>
  <button class="tbtn" disabled aria-label="Shape binder"><svg><use href="#i-surf"/></svg></button>
  <button class="tbtn" disabled aria-label="Sub-shape binder"><svg><use href="#i-surf2"/></svg></button>
  <button class="tbtn" disabled aria-label="Clone"><svg><use href="#i-sheep"/></svg></button>
  <span class="grip"></span>
  <button class="tbtn" disabled aria-label="Pad"><svg><use href="#i-pad"/></svg></button>
  <button class="tbtn" disabled aria-label="Revolution"><svg><use href="#i-rev"/></svg></button>
  <button class="tbtn" disabled aria-label="Additive loft"><svg><use href="#i-loft"/></svg></button>
  <button class="tbtn" disabled aria-label="Additive pipe"><svg><use href="#i-pipe"/></svg></button>
  <button class="tbtn" disabled aria-label="Additive helix"><svg><use href="#i-helix"/></svg></button>
  <button class="tbtn" disabled aria-label="Additive primitive"><svg><use href="#i-box"/></svg></button><button class="tcar" disabled aria-label="Additive primitives"></button>
  <span class="tsep"></span>
  <button class="tbtn" disabled aria-label="Pocket"><svg><use href="#i-pocket"/></svg></button>
  <button class="tbtn" disabled aria-label="Hole"><svg><use href="#i-hole"/></svg></button>
  <button class="tbtn" disabled aria-label="Groove"><svg><use href="#i-groove"/></svg></button>
  <button class="tbtn" disabled aria-label="Subtractive loft"><svg><use href="#i-subloft"/></svg></button>
  <button class="tbtn" disabled aria-label="Subtractive pipe"><svg><use href="#i-subpipe"/></svg></button>
  <button class="tbtn" disabled aria-label="Subtractive helix"><svg><use href="#i-helix"/></svg></button>
  <button class="tbtn" disabled aria-label="Subtractive primitive"><svg><use href="#i-subbox"/></svg></button><button class="tcar" disabled aria-label="Subtractive primitives"></button>
  <span class="tsep"></span>
  <button class="tbtn" disabled aria-label="Mirrored"><svg><use href="#i-mirror"/></svg></button>
  <button class="tbtn" disabled aria-label="Linear pattern"><svg><use href="#i-linpat"/></svg></button>
  <button class="tbtn" disabled aria-label="Polar pattern"><svg><use href="#i-polpat"/></svg></button>
  <button class="tbtn" disabled aria-label="MultiTransform"><svg><use href="#i-multi"/></svg></button>
  <span class="tsep"></span>
  <button class="tbtn" disabled aria-label="Fillet"><svg><use href="#i-fillet"/></svg></button>
  <button class="more ms-auto" aria-label="More tools"><svg width="16" height="10" fill="none" stroke="#333" stroke-width="1.500"><path d="M4 2L7 5L4 8M8 2L11 5L8 8"/></svg></button>
  <span class="grip ms-1"></span>
  <button class="tbtn" disabled aria-label="Measure"><svg><use href="#i-tape"/></svg></button>
  <button class="more" aria-label="More measure tools"><svg width="16" height="10" fill="none" stroke="#333" stroke-width="1.500"><path d="M4 2L7 5L4 8M8 2L11 5L8 8"/></svg></button>
</div>

<main class="d-flex flex-fill overflow-hidden">
  <aside class="dock d-flex flex-column flex-shrink-0">
    <div class="dock-title d-flex align-items-center justify-content-between"><span>Combo View</span><button class="dbtn" aria-label="Float panel"><svg width="11" height="11"><use href="#i-float"/></svg></button></div>
    <div class="docktabs nav nav-tabs" role="tablist">
      <button class="nav-link" role="tab">Model</button>
      <button class="nav-link active d-flex align-items-center gap-1" role="tab"><svg width="16" height="16"><path d="M3 3L12 12" stroke="#2b4a78" stroke-width="5.500"/><path d="M4.500 2L13 10.500" stroke="#5b82b8" stroke-width="1.200"/><path d="M10 14L14 10L15.500 15.500Z" fill="#ddd" stroke="#333" stroke-width=".7"/></svg>Tasks</button>
    </div>
    <section class="pane flex-fill d-flex">
      <div class="paneinner flex-fill">
        <div class="qbtns d-flex justify-content-center">
          <button class="qbtn d-flex align-items-center justify-content-center"><svg width="16" height="16"><use href="#i-redx"/></svg><span><span class="acc">C</span>ancel</span></button>
          <button class="qbtn qbtn-ok d-flex align-items-center justify-content-center"><svg width="16" height="16"><circle cx="8" cy="8" r="8" fill="#148021"/><path d="M4 8L7 11L12 5.500" fill="none" stroke="#fff" stroke-width="1.500"/></svg><span><span class="acc">O</span>K</span></button>
        </div>
        <div class="thead d-flex align-items-center"><svg width="16" height="16"><rect x=".5" y=".5" width="15" height="15" fill="none" stroke="#205f94" stroke-dasharray="3 2"/><path d="M2 1L13 7L9.500 8L14.500 13L13 14.500L8 9.500L6.500 13Z" fill="#fff" stroke="#444" stroke-width=".6"/></svg>Select feature
          <button class="dbtn ms-auto w-auto h-auto" aria-label="Collapse"><svg width="14" height="14"><circle cx="7" cy="7" r="7" fill="#f3f8fc"/><path d="M4 6.500L7 3.500L10 6.500M4 10.500L7 7.500L10 10.500" fill="none" stroke="#2a7db5" stroke-width="1.300"/></svg></button></div>
        <div class="tbody">
          <ul class="flist list-unstyled mb-0"><li>XY_Plane (Base plane)</li><li>XZ_Plane (Base plane)</li><li>YZ_Plane (Base plane)</li></ul>
          <div class="form-check used-row"><input class="form-check-input" type="checkbox" id="used"><label class="form-check-label" for="used">Allow used features</label></div>
          <div class="ext-label" id="ext">Allow external features</div>
          <div class="gbox d-flex flex-column" role="group" aria-labelledby="ext">
            <div class="form-check"><input class="form-check-input" type="checkbox" id="same"><label class="form-check-label" for="same">From other bodies of the same part</label></div>
            <div class="form-check"><input class="form-check-input" type="checkbox" id="free"><label class="form-check-label" for="free">From different parts or free features</label></div>
            <hr>
            <div class="form-check"><input class="form-check-input" type="radio" name="cp" id="c1" checked disabled><label class="form-check-label" for="c1">Make independent copy (recommended)</label></div>
            <div class="form-check"><input class="form-check-input" type="radio" name="cp" id="c2" disabled><label class="form-check-label" for="c2">Make dependent copy</label></div>
            <div class="form-check"><input class="form-check-input" type="radio" name="cp" id="c3" disabled><label class="form-check-label" for="c3">Create cross-reference</label></div>
          </div>
        </div>
      </div>
    </section>
  </aside>
  <div class="vsplit d-flex align-items-center justify-content-center flex-shrink-0"></div>
  <div class="d-flex flex-column flex-fill overflow-hidden">
    <div class="view3d position-relative flex-fill">
      <svg class="scene position-absolute" viewBox="389 137 1531 664">
        <g class="pl"><path d="M968 231L1341 354V707L968 584Z"/><path d="M1076 300L1448 424L1235 638L861 514Z"/><path d="M1262 186V538L1047 752V400Z"/></g>
        <text class="plabel" transform="matrix(1.06 .35 0 1 971 249)" fill="#2f78c0">XZ_Plane</text>
        <text class="plabel" transform="matrix(1.06 .35 -.61 .61 1068 311)" fill="#28609c">XY_Plane</text>
        <text class="plabel" transform="matrix(.61 -.61 0 1 1049 413)" fill="#1c4975">YZ_Plane</text>
      </svg>
      <svg class="navcube position-absolute" width="180" height="158" viewBox="0 6 540 474">
        <g fill="#9295b3"><path d="M322 26L357 63H288ZM126 224L159 191V258ZM519 224L483 189V262ZM322 423L287 388H354Z"/><path d="M264 48L270 70Q230 82 206 106L216 118L174 132L178 86L188 96Q216 62 264 48ZM378 48L372 70Q412 82 436 104L426 118L468 132L464 86L452 96Q426 62 378 48Z"/></g>
        <path d="M300 118L385 130Q424 150 426 170L412 260L362 342Q340 352 320 346L262 330L222 292L202 205L208 165L240 138Z" fill="#8f93b6" stroke="#b3b6ce" stroke-width="4"/>
        <path d="M300 120L386 134L398 144L350 196L232 168L280 132Z" fill="#c9cade"/><path d="M216 192L326 214L340 240L336 344L258 320L228 284Z" fill="#cdcee0"/><path d="M418 170L424 190L410 258L368 334L370 250Z" fill="#c5c7dc"/>
        <path d="M208 165L216 158L224 176L212 198ZM284 122L304 118L318 126L298 136Z" fill="#b9bcd4"/>
        <path d="M298 128V218L390 256" fill="none" stroke="#3c3c6c" stroke-width="3"/><circle cx="352" cy="222" r="26" fill="#c3c5da"/><path d="M290 216L316 212V240H296Z" fill="#d0d2e2"/>
        <path d="M185 210L207 308" stroke="#00f" stroke-width="5"/><path d="M208 308L312 360" stroke="#f00" stroke-width="5"/><path d="M208 308L240 278" stroke="#0f0" stroke-width="5"/><path d="M240 278L302 222" stroke="#7de57d" stroke-width="4"/>
        <g font-family="Liberation Sans,sans-serif" font-size="28"><text x="178" y="158" fill="#00f">Z</text><text x="304" y="228" fill="#7fe08a">Y</text><text x="364" y="387" fill="#f00">X</text></g>
        <g font-family="Liberation Sans,sans-serif" font-weight="700"><text transform="translate(236 270) rotate(16)" font-size="24">FRONT</text><text transform="translate(298 158) rotate(4)" font-size="22" font-style="italic">TOP</text></g>
        <path d="M384 272L394 250L390 262L408 222L400 244L410 232M386 262L400 258" fill="none" stroke="#000" stroke-width="4"/>
        <path d="M420 348L450 358V398L420 408L390 398V358Z" fill="#8d90ab" stroke="#777a96" stroke-width="2"/><path d="M390 358L420 348L450 358L420 368Z" fill="#a5a8c0"/><path d="M420 368L450 358V398L420 408Z" fill="#74778f"/><path d="M462 369H498L480 387Z" fill="#40405c"/>
      </svg>
      <svg class="axes position-absolute" width="40" height="40" viewBox="720 50 120 120"><path d="M741 144V78" stroke="#1e1e90" stroke-width="5"/><path d="M732 104L741 84L750 104Z" fill="#1e1e90"/><path d="M742 144L806 165" stroke="#8c2020" stroke-width="5"/><path d="M784 150L806 166L778 164Z" fill="#8c2020"/><path d="M742 144L764 122" stroke="#208a20" stroke-width="4"/><circle cx="762" cy="123" r="6" fill="#208a20"/><g font-family="Liberation Sans,sans-serif" font-size="28"><text x="748" y="78">Z</text><text x="776" y="116">Y</text><text x="814" y="168">X</text></g></svg>
    </div>
    <div class="doctabs d-flex align-items-start flex-shrink-0">
      <div class="dtab d-flex align-items-center"><svg width="16" height="16"><use href="#i-fc"/></svg><a href="#">Start page</a><button aria-label="Close Start page"><svg width="16" height="16"><use href="#i-redx"/></svg></button></div>
      <div class="dtab on d-flex align-items-center"><svg width="16" height="16"><use href="#i-fc"/></svg><a href="#">Unnamed : 1*</a><button aria-label="Close Unnamed"><svg width="16" height="16"><use href="#i-redx"/></svg></button></div>
      <div class="rest flex-fill"></div>
    </div>
  </div>
</main>

<section class="flex-shrink-0">
  <div class="reptitle position-relative d-flex align-items-center justify-content-between"><span>Report view</span><span class="repbtns d-flex"><button class="dbtn" aria-label="Float report"><svg width="11" height="11"><use href="#i-float"/></svg></button><button class="dbtn" aria-label="Close report"><svg width="11" height="11"><use href="#i-close"/></svg></button></span></div>
  <div class="report">10:48:15  Drawing became obsolete in 0.17; consider using TechDraw instead.</div>
</section>

<footer class="status d-flex align-items-center flex-shrink-0">
  <span>Preselected: Unnamed.Body.Origin.XY_Plane. (-32.500000 mm, -0.304358 mm, 0.000000 mm)</span>
  <button class="ms-auto d-flex align-items-center"><svg width="10" height="14" class="me-1"><rect x=".8" y=".8" width="8.400" height="12.400" rx="3.500" fill="none" stroke="#444" stroke-width="1.300"/><path d="M5 3V6.500" stroke="#444" stroke-width="1.500"/></svg>CAD<svg width="7" height="4" class="ms-2"><path d="M1 0H6L3.500 3Z" fill="#555"/></svg></button>
  <span class="ms-2 ps-1">230.57 mm x 100.00 mm</span>
</footer>
</body>
</html>
